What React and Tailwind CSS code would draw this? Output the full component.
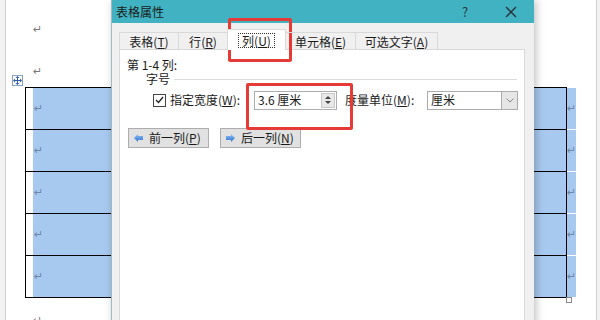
import React from "react";

const FONT = "font-['Noto_Sans_CJK_SC','Noto_Sans',sans-serif]";

function Mark({ className = "" }) {
  return (
    <span className={`font-['DejaVu_Sans',sans-serif] text-[11px] leading-none ${className}`}>↵</span>
  );
}

function Key({ k }) {
  return (
    <span>
      (<span className="underline underline-offset-[1px]">{k}</span>)
    </span>
  );
}

function Row({ last }) {
  return (
    <div className="flex">
      <div
        className={`flex h-[42px] w-[542px] border-l border-r border-t border-black ${last ? "border-b h-[43px]" : ""}`}
      >
        <div className="w-[7px] bg-white" />
        <div className="flex flex-1 items-center bg-[#a8c9ef] pl-[1px]">
          <Mark className="text-[#6d87ab]" />
        </div>
      </div>
      <div className="flex h-[42px] w-[9px] items-center border-t border-white bg-[#a8c9ef]">
        <Mark className="text-[#6d87ab]" />
      </div>
    </div>
  );
}

function Arrow({ dir }) {
  return (
    <svg width="9" height="8" viewBox="0 0 9 8">
      <defs>
        <linearGradient id={`g${dir}`} x1="0" y1="0" x2="0" y2="1">
          <stop offset="0" stopColor="#8fc3f5" />
          <stop offset="1" stopColor="#2f6fd0" />
        </linearGradient>
      </defs>
      {dir === "left" ? (
        <polygon points="0,4 4,0 4,2 9,2 9,6 4,6 4,8" fill={`url(#g${dir})`} />
      ) : (
        <polygon points="9,4 5,0 5,2 0,2 0,6 5,6 5,8" fill={`url(#g${dir})`} />
      )}
    </svg>
  );
}

export default function App() {
  return (
    <div className={`relative h-[320px] w-[600px] overflow-hidden bg-white text-[12px] text-[#1a1a1a] ${FONT}`}>
      {/* document */}
      <div className="flex h-full">
        <div className="w-[6px] border-r border-[#cfcfcf] bg-[#f2f2f2]" />
        <div className="flex flex-1 flex-col pl-[19px]">
          <div className="mt-[19px] h-[12px] pl-[8px]">
            <Mark className="text-[#7a7a7a]" />
          </div>
          <div className="mt-[30px] h-[12px] pl-[8px]">
            <Mark className="text-[#7a7a7a]" />
          </div>
          <div className="relative mt-[14px]">
            <div className="absolute -left-[13px] -top-[12px] flex h-[11px] w-[11px] items-center justify-center border border-[#8aa0c0] bg-white">
              <svg width="9" height="9" viewBox="0 0 9 9" fill="#2f5fa8">
                <polygon points="4.5,0 6.5,2 2.5,2" />
                <polygon points="4.5,9 6.5,7 2.5,7" />
                <polygon points="0,4.5 2,2.5 2,6.5" />
                <polygon points="9,4.5 7,2.5 7,6.5" />
                <rect x="4" y="2" width="1" height="5" />
                <rect x="2" y="4" width="5" height="1" />
              </svg>
            </div>
            <Row />
            <Row />
            <Row />
            <Row />
            <Row last />
            <div className="absolute left-[541px] top-[210px] h-[6px] w-[6px] border border-[#888] bg-white" />
          </div>
          <div className="mt-[12px] pl-[8px]">
            <Mark className="text-[#7a7a7a]" />
          </div>
        </div>
        <div className="w-[4px] border-l border-[#d0d0d0] bg-[#f2f2f2]" />
      </div>

      {/* dialog */}
      <div className="absolute left-[111px] top-0 flex h-[340px] w-[423px] flex-col border-l border-[#9fb9c0] bg-[#f0f0f0] shadow-[2px_0_8px_rgba(0,0,0,0.25)]">
        <div className="flex h-[23px] items-center justify-between bg-[#41b2c1] pl-[4px]">
          <span className="text-[12px]">表格属性</span>
          <div className="flex h-full">
            <div className="flex w-[46px] items-center justify-center text-[13px] text-[#2a3a40]">?</div>
            <div className="flex w-[46px] items-center justify-center">
              <svg width="12" height="12" viewBox="0 0 12 12" stroke="#263238" strokeWidth="1.3">
                <line x1="1" y1="1" x2="11" y2="11" />
                <line x1="11" y1="1" x2="1" y2="11" />
              </svg>
            </div>
          </div>
        </div>

        <div className="flex flex-1 flex-col pl-[7px] pr-[9px] pt-[7px]">
          {/* tabs */}
          <div className="relative z-10 flex h-[20px] items-end">
            <div className="flex h-[18px] w-[59px] items-center justify-center border-l border-t border-[#d9d9d9]">
              表格<Key k="T" />
            </div>
            <div className="flex h-[18px] w-[49px] items-center justify-center border-l border-t border-[#d9d9d9]">
              行<Key k="R" />
            </div>
            <div className="flex h-[21px] w-[59px] items-center justify-center border-l border-r border-t border-[#d9d9d9] bg-white">
              <span className="border border-dotted border-[#333] px-[3px] leading-[13px]">
                列<Key k="U" />
              </span>
            </div>
            <div className="flex h-[18px] w-[69px] items-center justify-center border-t border-[#d9d9d9]">
              单元格<Key k="E" />
            </div>
            <div className="flex h-[18px] w-[83px] items-center justify-center border-l border-r border-t border-[#d9d9d9]">
              可选文字<Key k="A" />
            </div>
          </div>

          {/* panel */}
          <div className="-mt-[1px] flex flex-1 flex-col border border-[#d9d9d9] bg-white pl-[7px] pt-[8px]">
            <div className="h-[14px] leading-[14px]">第 1-4 列:</div>
            <div className="flex h-[14px] items-center pl-[19px]">
              <span className="leading-[14px]">字号</span>
              <div className="ml-[4px] mr-[7px] h-px flex-1 bg-[#dcdcdc]" />
            </div>
            <div className="mt-[4px] flex h-[20px] items-center pl-[26px]">
              <div className="flex h-[13px] w-[13px] items-center justify-center border border-[#444] bg-white">
                <svg width="9" height="8" viewBox="0 0 9 8" fill="none" stroke="#222" strokeWidth="1.3">
                  <polyline points="1,4 3.5,6.5 8,1" />
                </svg>
              </div>
              <span className="ml-[4px] w-[84px]">
                指定宽度<Key k="W" />:
              </span>
              <div className="flex h-[19px] w-[83px] items-center justify-between border border-[#abadb3] bg-white pl-[3px] pr-[1px]">
                <span>3.6 厘米</span>
                <div className="flex h-[15px] w-[14px] flex-col items-center justify-center gap-[2px] border border-[#c8c8c8] bg-[#e8e8e8]">
                  <div className="h-0 w-0 border-x-[3px] border-b-[3px] border-x-transparent border-b-[#444]" />
                  <div className="h-0 w-0 border-x-[3px] border-t-[3px] border-x-transparent border-t-[#444]" />
                </div>
              </div>
              <span className="ml-[8px] w-[82px]">
                度量单位<Key k="M" />:
              </span>
              <div className="flex h-[19px] w-[91px] items-center justify-between border border-[#acacac] bg-white pl-[3px]">
                <span>厘米</span>
                <div className="flex h-full w-[16px] items-center justify-center border-l border-[#acacac] bg-[#e6e6e6]">
                  <svg width="8" height="5" viewBox="0 0 8 5" fill="none" stroke="#888" strokeWidth="1">
                    <polyline points="0.5,0.5 4,4 7.5,0.5" />
                  </svg>
                </div>
              </div>
            </div>
            <div className="mt-[18px] flex gap-[11px] pl-[1px]">
              <div className="flex h-[20px] w-[81px] items-center gap-[6px] border border-[#adadad] bg-[#e1e1e1] pl-[5px]">
                <Arrow dir="left" />
                <span>
                  前一列<Key k="P" />
                </span>
              </div>
              <div className="flex h-[20px] w-[81px] items-center gap-[6px] border border-[#adadad] bg-[#e1e1e1] pl-[5px]">
                <Arrow dir="right" />
                <span>
                  后一列<Key k="N" />
                </span>
              </div>
            </div>
          </div>
        </div>
      </div>

      {/* annotations */}
      <div className="absolute left-[228px] top-[18px] h-[44px] w-[64px] rounded-[2px] border-[3px] border-[#e53a35]" />
      <div className="absolute left-[246px] top-[83px] h-[47px] w-[107px] rounded-[2px] border-[3px] border-[#e53a35]" />
    </div>
  );
}
